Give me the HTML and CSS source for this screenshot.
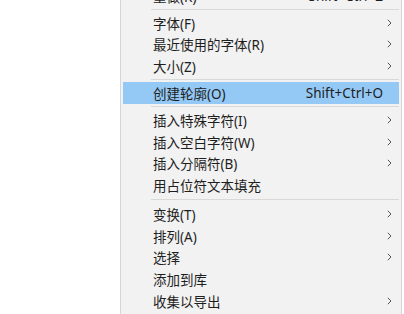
FILE: index.html
```html
<!DOCTYPE html>
<html>
<head>
<meta charset="utf-8">
<link rel="stylesheet" href="styles.css">
</head>
<body>
<div class="menu">
  <div class="item"><span class="label">重做(R)</span><span class="key">Shift+Ctrl+Z</span><span class="arrow"></span></div>
  <div class="sep"></div>
  <div class="item"><span class="label">字体(F)</span><span class="key"></span><span class="arrow"><svg width="5" height="8" viewBox="0 0 5 8"><path d="M0.8 0.8 L4 4 L0.8 7.2" fill="none" stroke="#555" stroke-width="1"/></svg></span></div>
  <div class="item"><span class="label">最近使用的字体(R)</span><span class="key"></span><span class="arrow"><svg width="5" height="8" viewBox="0 0 5 8"><path d="M0.8 0.8 L4 4 L0.8 7.2" fill="none" stroke="#555" stroke-width="1"/></svg></span></div>
  <div class="item"><span class="label">大小(Z)</span><span class="key"></span><span class="arrow"><svg width="5" height="8" viewBox="0 0 5 8"><path d="M0.8 0.8 L4 4 L0.8 7.2" fill="none" stroke="#555" stroke-width="1"/></svg></span></div>
  <div class="sep"></div>
  <div class="item active"><span class="label">创建轮廓(O)</span><span class="key">Shift+Ctrl+O</span><span class="arrow"></span></div>
  <div class="sep"></div>
  <div class="item"><span class="label">插入特殊字符(I)</span><span class="key"></span><span class="arrow"><svg width="5" height="8" viewBox="0 0 5 8"><path d="M0.8 0.8 L4 4 L0.8 7.2" fill="none" stroke="#555" stroke-width="1"/></svg></span></div>
  <div class="item"><span class="label">插入空白字符(W)</span><span class="key"></span><span class="arrow"><svg width="5" height="8" viewBox="0 0 5 8"><path d="M0.8 0.8 L4 4 L0.8 7.2" fill="none" stroke="#555" stroke-width="1"/></svg></span></div>
  <div class="item"><span class="label">插入分隔符(B)</span><span class="key"></span><span class="arrow"><svg width="5" height="8" viewBox="0 0 5 8"><path d="M0.8 0.8 L4 4 L0.8 7.2" fill="none" stroke="#555" stroke-width="1"/></svg></span></div>
  <div class="item"><span class="label">用占位符文本填充</span><span class="key"></span><span class="arrow"></span></div>
  <div class="sep wide"></div>
  <div class="item"><span class="label">变换(T)</span><span class="key"></span><span class="arrow"><svg width="5" height="8" viewBox="0 0 5 8"><path d="M0.8 0.8 L4 4 L0.8 7.2" fill="none" stroke="#555" stroke-width="1"/></svg></span></div>
  <div class="item"><span class="label">排列(A)</span><span class="key"></span><span class="arrow"><svg width="5" height="8" viewBox="0 0 5 8"><path d="M0.8 0.8 L4 4 L0.8 7.2" fill="none" stroke="#555" stroke-width="1"/></svg></span></div>
  <div class="item"><span class="label">选择</span><span class="key"></span><span class="arrow"><svg width="5" height="8" viewBox="0 0 5 8"><path d="M0.8 0.8 L4 4 L0.8 7.2" fill="none" stroke="#555" stroke-width="1"/></svg></span></div>
  <div class="item"><span class="label">添加到库</span><span class="key"></span><span class="arrow"></span></div>
  <div class="item"><span class="label">收集以导出</span><span class="key"></span><span class="arrow"><svg width="5" height="8" viewBox="0 0 5 8"><path d="M0.8 0.8 L4 4 L0.8 7.2" fill="none" stroke="#555" stroke-width="1"/></svg></span></div>
</div>
</body>
</html>
```
FILE: styles.css
```css
html, body {
  margin: 0;
  padding: 0;
  background: #ffffff;
  overflow: hidden;
}
body {
  width: 404px;
  height: 314px;
  font-family: "Noto Sans", "Noto Sans CJK SC", sans-serif;
  font-size: 13.5px;
  color: #1e1e1e;
}
.menu {
  margin-left: 120px;
  margin-top: -17px;
  width: 276px;
  min-height: 340px;
  background: #f2f2f2;
  border-left: 1px solid #d6d6d6;
  border-right: 1px solid #d6d6d6;
  padding: 2px;
  display: flex;
  flex-direction: column;
}
.item {
  height: 21.75px;
  flex: none;
  display: flex;
  align-items: center;
  padding-left: 30px;
  padding-right: 7px;
  white-space: nowrap;
}
.item.active {
  height: 22px;
  background: #94c9f5;
}
.label {
  flex: 1;
}
.key {
  margin-right: 3px;
}
.arrow {
  width: 6px;
  display: flex;
  align-items: center;
  justify-content: flex-end;
}
.arrow svg {
  display: block;
}
.sep {
  flex: none;
  height: 1px;
  background: #d9d9d9;
  margin: 2px 0 2px 28px;
}
.sep.wide {
  margin: 3px 0 3px 28px;
}
```
